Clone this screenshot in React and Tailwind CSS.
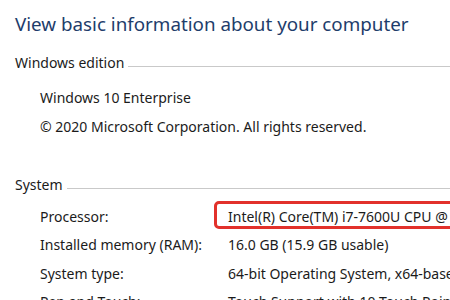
const Row = ({ label, value, boxed }) => {
 return (
  <div className="relative flex items-center h-[28.5px]">
   {boxed && (
    <span className="absolute left-[174px] top-[-2px] h-[28px] w-[260px] border-[3px] border-[#e2312b] rounded-[5px]" />
   )}
   <div className="w-[188px] shrink-0">{label}</div>
   <div className="whitespace-nowrap">{value}</div>
  </div>
 );
};

const Section = ({ title }) => {
 return (
  <div className="flex items-center gap-[4px] h-[30px]">
   <span className="whitespace-nowrap">{title}</span>
   <div className="flex-1 h-px bg-[#c9c9c9] mt-[7px]" />
  </div>
 );
};

const App = () => {
 return (
  <div className="w-[450px] h-[300px] overflow-hidden bg-white text-[14px] text-[#1b1b1b] font-['Noto_Sans',sans-serif] pl-[15px] leading-none">
   <h1 className="h-[48px] flex items-center text-[18.8px] text-[#1e3d6b] whitespace-nowrap">View basic information about your computer</h1>
   <Section title="Windows edition" />
   <div className="pl-[25px] mt-[5.5px]">
    <div className="h-[29px] flex items-center">Windows 10 Enterprise</div>
    <div className="h-[29px] flex items-center">© 2020 Microsoft Corporation. All rights reserved.</div>
   </div>
   <div className="mt-[28px]">
    <Section title="System" />
   </div>
   <div className="pl-[25px] mt-[3px]">
    <Row label="Processor:" value="Intel(R) Core(TM) i7-7600U CPU @ 2.80GHz 2.90 GHz" boxed />
    <Row label="Installed memory (RAM):" value="16.0 GB (15.9 GB usable)" />
    <Row label="System type:" value="64-bit Operating System, x64-based processor" />
    <Row label="Pen and Touch:" value="Touch Support with 10 Touch Points" />
   </div>
  </div>
 );
};

export default App;
